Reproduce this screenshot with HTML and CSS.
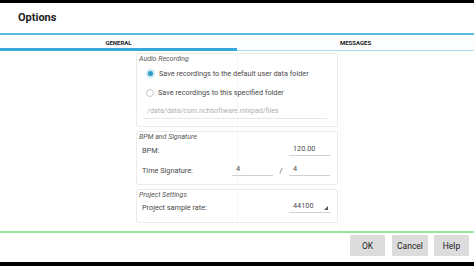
FILE: index.html
```html
<!DOCTYPE html>
<html>
<head>
    <title>Options</title>
    <link rel="stylesheet" href="styles.css">
</head>
<body>
    <div class="topbar"></div>
    <div class="header">Options</div>

    <div class="tabs">
        <div class="tab active">GENERAL</div>
        <div class="tab">MESSAGES</div>
    </div>

    <div class="content">
        <div class="group audio">
            <div class="legend">Audio Recording</div>
            <div class="radio-row">
                <span class="radio checked"></span>
                <span>Save recordings to the default user data folder</span>
            </div>
            <div class="radio-row">
                <span class="radio"></span>
                <span>Save recordings to this specified folder</span>
            </div>
            <div class="path">/data/data/com.nchsoftware.mixpad/files</div>
        </div>

        <div class="group bpm">
            <div class="legend">BPM and Signature</div>
            <div class="row">
                <span class="label">BPM:</span>
                <span class="field">120.00</span>
            </div>
            <div class="row">
                <span class="label">Time Signature:</span>
                <span class="field">4</span>
                <span class="slash">/</span>
                <span class="field">4</span>
            </div>
        </div>

        <div class="group project">
            <div class="legend">Project Settings</div>
            <div class="row">
                <span class="label">Project sample rate:</span>
                <span class="field spinner">44100</span>
            </div>
        </div>
    </div>

    <div class="footer">
        <button class="ok">OK</button>
        <button class="cancel">Cancel</button>
        <button class="help">Help</button>
    </div>
    <div class="bottombar"></div>
</body>
</html>
```

FILE: styles.css
```css
body { margin: 0; width: 474px; height: 266px; overflow: hidden; background: #fff; font-family: Roboto, "Noto Sans", sans-serif; color: #4a4a4a; display: flex; flex-direction: column; }
.topbar { height: 3px; background: #000; }
.header { height: 30px; padding-left: 18px; font-size: 11px; font-weight: bold; line-height: 29px; color: #222; }

.tabs { display: flex; border-top: 2px solid #5bbce6; background: #fbfdfe; }
.tab { flex: 1; text-align: center; font-size: 6px; font-weight: bold; height: 15px; line-height: 16px; border-bottom: 1px solid #a9dcf2; color: #222; }
.tab.active { border-bottom: 3px solid #36a8dc; height: 13px; }

.content { flex: 1; display: flex; flex-direction: column; align-items: center; padding-top: 2px; background: linear-gradient(to right, #fff 237px, #f2f2f2 237px, #fff 238px, #fff 340px, #f3f3f3 340px, #fff 341px); }
.group { width: 200px; border: 1px solid #ebebeb; border-radius: 2px; margin-bottom: 4px; font-size: 7.3px; font-weight: 400; }
.legend { font-style: italic; font-size: 7px; color: #555; padding: 1px 2px 0; height: 9px; }

.audio { height: 72px; }
.radio-row { display: flex; align-items: center; height: 19px; padding-left: 9px; }
.radio-row span:last-child { margin-left: 4px; }
.radio { width: 8px; height: 8px; border: 1px solid #c8c8c8; border-radius: 50%; box-sizing: border-box; background: #fff; }
.radio.checked { background: #2a9cc6; border: 2px solid #cfe9f3; width: 9px; height: 9px; }
.path { margin: 2px 10px 0 6px; padding: 3px 0 3px 4px; color: #b0b0b0; font-size: 7px; border-bottom: 1px solid #e6e6e6; }

.bpm { height: 52px; }
.row { display: flex; align-items: center; height: 20px; padding-left: 5px; }
.bpm .legend { margin-bottom: -2px; }
.project .legend { margin-bottom: -3px; }
.label { flex: 1; }
.field { width: 41px; border-bottom: 1px solid #d0d0d0; padding-left: 4px; box-sizing: border-box; height: 12px; margin-right: 7px; }
.slash { width: 16px; text-align: center; margin-left: -7px; margin-right: 0; }
.project { height: 32px; }
.spinner { position: relative; }
.spinner::after { content: ""; position: absolute; right: 2px; bottom: 2px; border-left: 4px solid transparent; border-bottom: 4px solid #555; }

.footer { height: 27px; margin-top: 2px; border-top: 2px solid #9be49b; display: flex; justify-content: flex-end; align-items: flex-start; padding: 2px 5px 0 0; }
button { font-family: Roboto, "Noto Sans", sans-serif; font-size: 8.5px; color: #222; background: #dcdcdc; border: none; border-radius: 1px; height: 21px; padding: 0; width: 35px; }
.cancel { width: 36px; margin: 0 6px 0 7px; }
.bottombar { height: 4px; background: #000; }
```
